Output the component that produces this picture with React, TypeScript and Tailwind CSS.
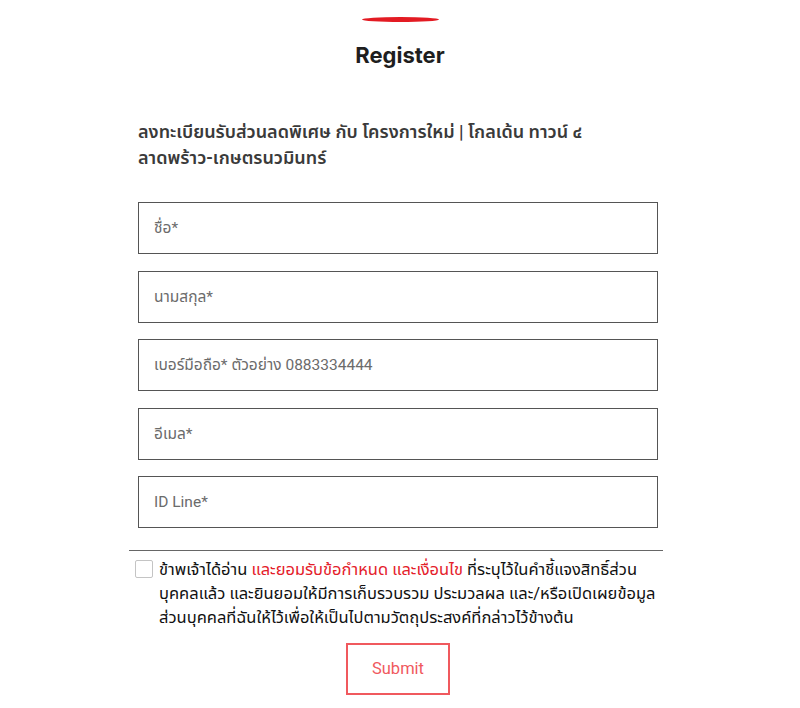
const fields = ["ชื่อ*", "นามสกุล*", "เบอร์มือถือ* ตัวอย่าง 0883334444", "อีเมล*", "ID Line*"];

export default function App() {
  return (
    <div className="h-[708px] w-[800px] bg-white font-['Roboto','Noto_Sans_Thai','Noto_Sans',sans-serif] text-[#222]">
      <div className="flex flex-col items-center pt-[17px]">
        <div className="h-[5px] w-[77px] rounded-[50%] bg-[#e31b23]" />
        <h1 className="mt-[18px] font-['Inter',sans-serif] text-[22px] font-bold leading-[30px] text-[#1e1e1e]">
          Register
        </h1>
      </div>

      <div className="ml-[138px] w-[520px]">
        <p className="mt-[49px] text-[18px] font-semibold leading-[26px] text-[#3a3a3a]">
          ลงทะเบียนรับส่วนลดพิเศษ กับ โครงการใหม่ | โกลเด้น ทาวน์ ๔ ลาดพร้าว-เกษตรนวมินทร์
        </p>

        <div className="mt-[31px] flex flex-col gap-[16.5px]">
          {fields.map((f) => (
            <input
              key={f}
              placeholder={f}
              className="h-[52px] w-full border border-[#555] px-[15px] text-[15.5px] text-[#333] outline-none placeholder:text-[#6b6b6b]"
            />
          ))}
        </div>
      </div>

      <div className="ml-[129px] mt-[22px] h-px w-[534px] bg-[#666]" />

      <div className="ml-[135px] mt-[7px] flex w-[560px] gap-[6px]">
        <span className="mt-[2px] h-[18px] w-[18px] shrink-0 rounded-[2px] border border-[#c4c4c4] bg-white" />
        <p className="whitespace-nowrap text-[16.5px] leading-[24px] text-[#111]">
          ข้าพเจ้าได้อ่าน <span className="text-[#e4202a]">และยอมรับข้อกำหนด และเงื่อนไข</span> ที่ระบุไว้ในคำชี้แจงสิทธิ์ส่วน
          <br />
          บุคคลแล้ว และยินยอมให้มีการเก็บรวบรวม ประมวลผล และ/หรือเปิดเผยข้อมูล
          <br />
          ส่วนบุคคลที่ฉันให้ไว้เพื่อให้เป็นไปตามวัตถุประสงค์ที่กล่าวไว้ข้างต้น
        </p>
      </div>

      <div className="mt-[13px] flex justify-center pr-[4px]">
        <button className="h-[52px] w-[104px] border-2 border-[#f0595e] text-[16.5px] text-[#f0595e]">
          Submit
        </button>
      </div>
    </div>
  );
}
